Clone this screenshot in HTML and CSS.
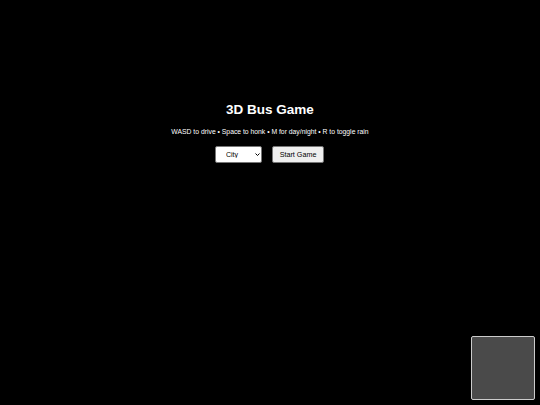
FILE: index.html
```html
<!DOCTYPE html>
<html>
<head>
<meta charset="utf-8">
<link rel="stylesheet" href="styles.css">
</head>
<body>
<div class="menu">
  <h1 class="title">3D Bus Game</h1>
  <p class="hint">WASD to drive • Space to honk • M for day/night • R to toggle rain</p>
  <div class="controls">
    <div class="select-wrap">
      <select class="mode">
        <option>City</option>
      </select>
      <svg class="chevron" width="5" height="3" viewBox="0 0 5 3"><path d="M0.5 0.5 L2.5 2.5 L4.5 0.5" fill="none" stroke="#000" stroke-width="1"/></svg>
    </div>
    <button class="start">Start Game</button>
  </div>
</div>
<div class="minimap"></div>
</body>
</html>
```
FILE: styles.css
```css
html, body {
  margin: 0;
  padding: 0;
  width: 540px;
  height: 405px;
  background: #000;
  overflow: hidden;
  font-family: "Liberation Sans", Arial, sans-serif;
}
.menu {
  display: flex;
  flex-direction: column;
  align-items: center;
  padding-top: 102px;
  color: #fff;
}
.title {
  margin: 0;
  font-size: 13.5px;
  font-weight: bold;
  line-height: 16px;
}
.hint {
  margin: 9px 0 0 0;
  font-size: 6.8px;
  line-height: 9px;
}
.controls {
  display: flex;
  gap: 10px;
  margin-top: 10px;
  margin-right: 1px;
}
.select-wrap {
  position: relative;
  width: 47px;
  height: 17px;
}
.mode {
  display: block;
  -webkit-appearance: none;
  appearance: none;
  width: 47px;
  height: 17px;
  font-family: "Liberation Sans", Arial, sans-serif;
  font-size: 7px;
  padding: 0 0 0 10px;
  margin: 0;
  border: 1px solid #767676;
  border-radius: 2px;
  background: #fff;
  color: #000;
}
.chevron {
  position: absolute;
  left: 40px;
  top: 7px;
  pointer-events: none;
}
.start {
  display: block;
  width: 52px;
  height: 17px;
  font-family: "Liberation Sans", Arial, sans-serif;
  font-size: 7.2px;
  padding: 0;
  margin: 0;
  border: 1px solid #767676;
  border-radius: 2px;
  background: #efefef;
  color: #000;
}
.minimap {
  position: absolute;
  left: 471px;
  top: 336px;
  width: 62px;
  height: 62px;
  border: 1px solid #ccc;
  border-radius: 2px;
  background: #4a4a4a;
}
```
